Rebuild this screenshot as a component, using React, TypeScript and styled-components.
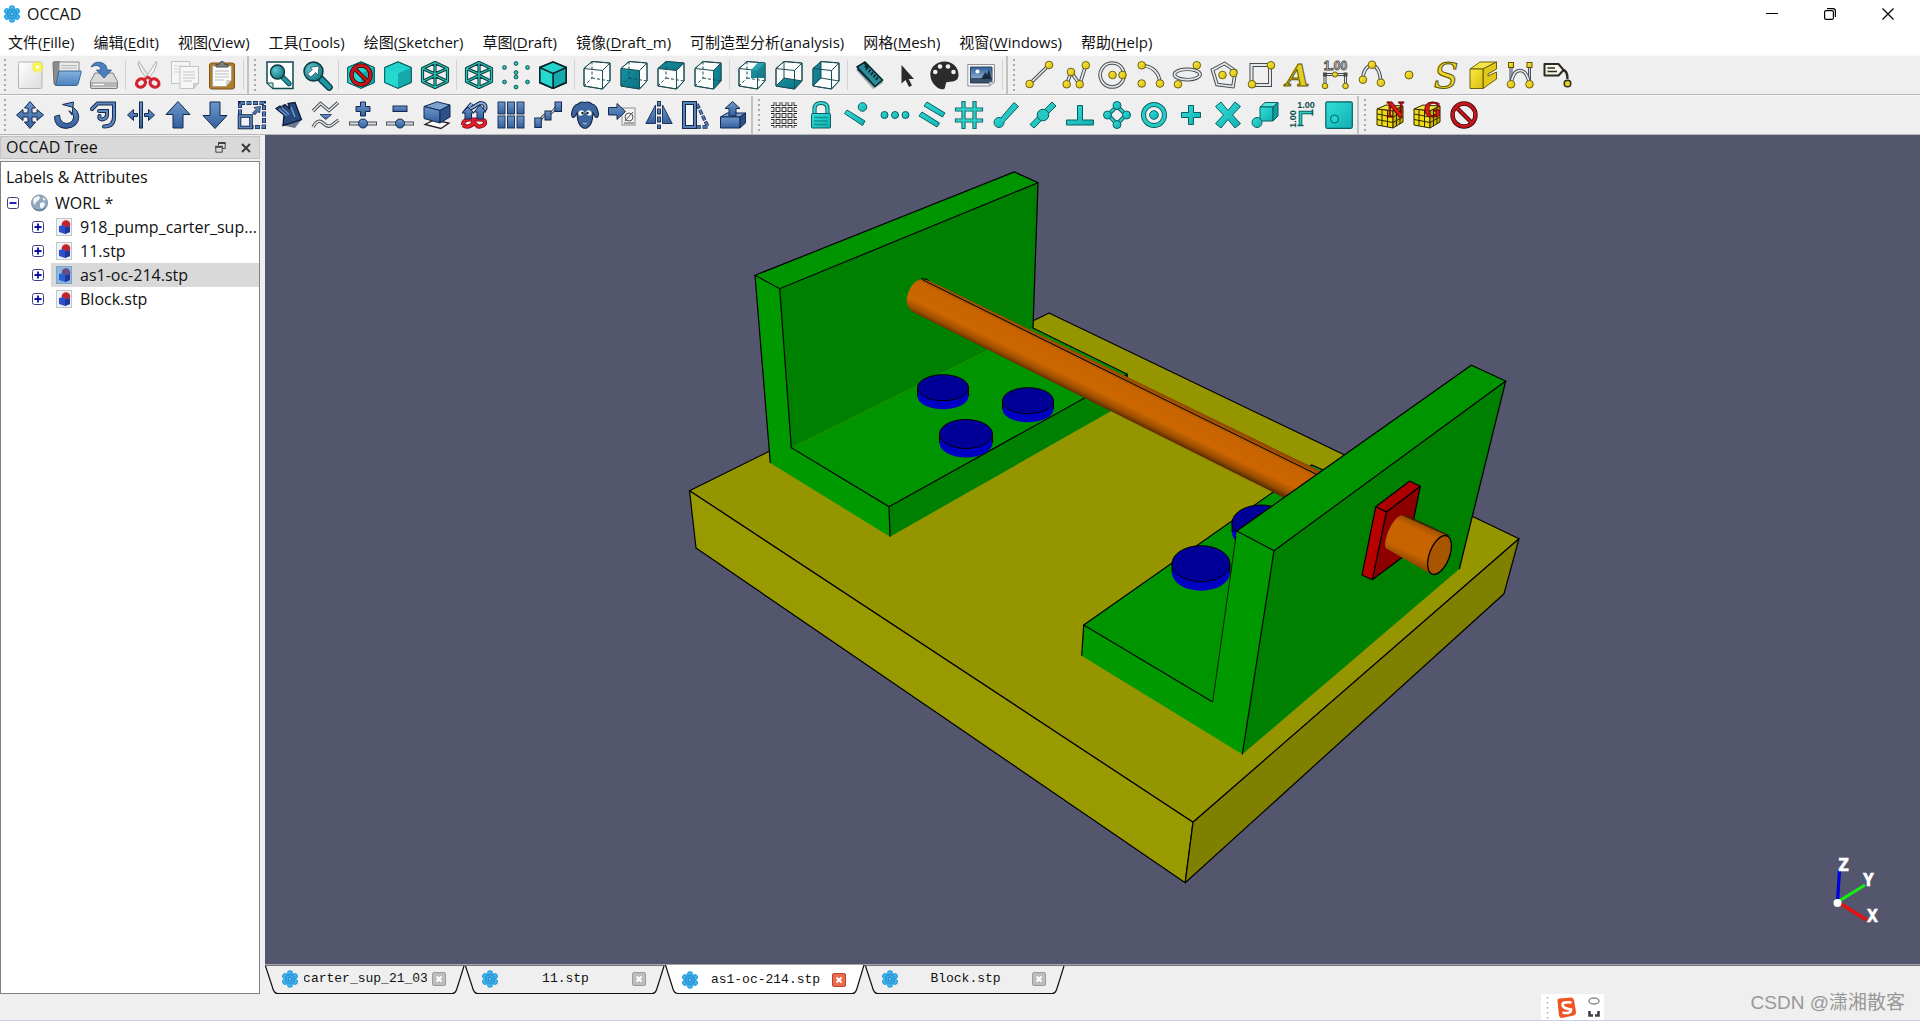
import React from 'react';
import styled, { createGlobalStyle } from 'styled-components';

const UI_FONT = '"Open Sans", "Noto Sans CJK SC", sans-serif';

const GlobalStyle = createGlobalStyle`
  *, *::before, *::after { box-sizing: border-box; }
  body { margin: 0; background: #efefef; }
  button { font: inherit; color: inherit; border: 0; padding: 0; margin: 0; background: none; cursor: default; }
  ul { list-style: none; margin: 0; padding: 0; }
  svg { display: block; }
`;

/* ---------- layout ---------- */

const Window = styled.div`
  display: flex;
  flex-direction: column;
  min-height: 100vh;
  background: #efefef;
  color: #111;
  font-family: ${UI_FONT};
  font-size: 16px;
`;

const TitleBar = styled.header`
  display: flex;
  align-items: center;
  height: 28px;
  padding: 0 3px;
  gap: 6px;
  background: #fff;
`;

const Title = styled.h1`
  flex: 1;
  margin: 0;
  font-size: 16px;
  font-weight: 400;
`;

const WindowButton = styled.button`
  display: flex;
  align-items: center;
  justify-content: center;
  width: 58px;
  height: 28px;
`;

const WindowButtons = styled.div`
  display: flex;
`;

const MenuBar = styled.nav`
  display: flex;
  gap: 3px;
  height: 27px;
  background: #fff;
`;

const MenuButton = styled.button`
  padding: 0 8px;
  line-height: 28px;
  white-space: nowrap;
  font-size: 15px;
  u { text-underline-offset: 2px; }
`;

const ToolRow = styled.div`
  display: flex;
  height: 40px;
  border-top: 1px solid #fafafa;
  border-bottom: 1px solid #b4b4b6;
`;

const ToolBar = styled.div<{ $last?: boolean }>`
  display: flex;
  align-items: center;
  margin-right: 1px;
  border-right: ${(p) => (p.$last ? '0' : '2px solid #c2c2c2')};
`;

const Grip = styled.span`
  width: 3px;
  height: 32px;
  margin: 0 4px;
  background: radial-gradient(circle at 1px 1px, #a9a9a9 1px, transparent 1px) 0 0 / 3px 5px;
`;

const ToolButton = styled.button`
  display: flex;
  align-items: center;
  justify-content: center;
  width: 37px;
  height: 38px;
`;

const ToolSeparator = styled.span`
  width: 1px;
  height: 30px;
  margin: 0 3px;
  background: #d2d2d2;
`;

const Body = styled.main`
  display: grid;
  grid-template-columns: 260px minmax(0, 1fr);
  column-gap: 5px;
  flex: 1;
`;

const Dock = styled.aside`
  display: flex;
  flex-direction: column;
  gap: 2px;
  padding-top: 1px;
`;

const DockHeader = styled.div`
  display: flex;
  align-items: center;
  height: 23px;
  padding: 0 5px;
  border: 1px solid #c3c3c3;
  background: #d9d9d9;
`;

const DockTitle = styled.h2`
  flex: 1;
  margin: 0;
  font-size: 16px;
  line-height: 21px;
  font-weight: 400;
`;

const DockButton = styled.button`
  display: flex;
  align-items: center;
  justify-content: center;
  width: 16px;
  height: 16px;
  margin-left: 10px;
`;

const TreeBox = styled.div`
  flex: 1;
  border: 1px solid #828282;
  background: #fff;
`;

const TreeHeader = styled.div`
  height: 29px;
  padding-left: 5px;
  line-height: 30px;
`;

const TreeRow = styled.div<{ $depth: number }>`
  display: flex;
  align-items: center;
  height: 24px;
  padding-left: ${(p) => 6 + p.$depth * 25}px;
`;

const TreeLabel = styled.button<{ $selected?: boolean }>`
  display: flex;
  flex: 1;
  align-items: center;
  gap: 7px;
  height: 24px;
  margin-left: 7px;
  padding-left: 5px;
  text-align: left;
  white-space: nowrap;
  background: ${(p) => (p.$selected ? '#d9d9d9' : 'transparent')};
`;

const Workspace = styled.section`
  display: flex;
  flex-direction: column;
`;

const Viewport = styled.div`
  position: relative;
  flex: 1;
  min-height: 400px;
  background: #53566d;
  border-bottom: 1px solid #a8a3ab;
`;

const SceneSvg = styled.svg`
  position: absolute;
  inset: 0;
  width: 100%;
  height: 100%;
`;

const TriadSvg = styled.svg`
  position: absolute;
  right: 33px;
  bottom: 36px;
`;

const TabBar = styled.div`
  display: flex;
  height: 29px;
  border-top: 1px solid #77747c;
`;

const TabItem = styled.div<{ $active?: boolean }>`
  position: relative;
  display: grid;
  grid-template-columns: 18px 123px 14px;
  column-gap: 5px;
  align-items: center;
  width: 200px;
  height: 28px;
  margin-top: ${(p) => (p.$active ? '-1px' : '0')};
  padding: ${(p) => (p.$active ? '3px' : '0')} 19px 2px 16px;
`;

const TabShape = styled.svg`
  position: absolute;
  inset: 0;
`;

const TabIcon = styled.span`
  position: relative;
`;

const TabLabel = styled.button`
  position: relative;
  display: flex;
  justify-content: center;
  overflow: hidden;
  white-space: nowrap;
  font-family: "Liberation Mono", monospace;
  font-size: 13px;
  line-height: 22px;
`;

const TabClose = styled.button<{ $active?: boolean }>`
  position: relative;
  display: flex;
  align-items: center;
  justify-content: center;
  width: 14px;
  height: 14px;
  border: 1px solid ${(p) => (p.$active ? '#b8452c' : '#9c9c9c')};
  border-radius: 2px;
  background: ${(p) => (p.$active ? '#ec6a4c' : '#bdbdbd')};
`;

const StatusBar = styled.footer`
  display: flex;
  align-items: center;
  justify-content: flex-end;
  height: 27px;
  padding-right: 15px;
  border-bottom: 1px solid #c8d0e6;
`;

const ImeBar = styled.div`
  display: flex;
  align-items: center;
  width: 63px;
  height: 26px;
  padding-left: 5px;
  margin-right: 147px;
  background: #fff;
`;

const Watermark = styled.span`
  color: #989898;
  font-family: "Liberation Sans", "Noto Sans CJK SC", sans-serif;
  font-size: 19px;
  line-height: 20px;
  padding-bottom: 8px;
  white-space: nowrap;
`;

const DefsSvg = styled.svg`
  position: absolute;
`;

/* ---------- icon primitives ---------- */

const BLUE = 'url(#g-blue)';
const TEAL = 'url(#g-teal)';
const YEL = 'url(#g-yellow)';
const NAVY = '#14284e';
const DTEAL = '#0a5f63';
const OLIVE = '#5f5300';

const Node = ({ x, y, r = 3.8 }: { x: number; y: number; r?: number }) => (
  <circle cx={x} cy={y} r={r} fill={YEL} stroke={OLIVE} strokeWidth={0.9} />
);

const TNode = ({ x, y, r = 4 }: { x: number; y: number; r?: number }) => (
  <circle cx={x} cy={y} r={r} fill={TEAL} stroke={DTEAL} strokeWidth={1} />
);

const Tube = ({ d, w = 3.6, outer = '#444a50', inner = '#e4e8ea', cap = 'butt' }: {
  d: string; w?: number; outer?: string; inner?: string; cap?: 'butt' | 'round' | 'square';
}) => (
  <>
    <path d={d} fill="none" stroke={outer} strokeWidth={w} strokeLinecap={cap} />
    <path d={d} fill="none" stroke={inner} strokeWidth={w - 1.9} strokeLinecap={cap} />
  </>
);

const Ban = ({ cx = 14, cy = 14, r = 10.5 }: { cx?: number; cy?: number; r?: number }) => {
  const k = r * 0.7;
  return (
    <g fill="none">
      <circle cx={cx} cy={cy} r={r} stroke="#3b0000" strokeWidth={4.4} />
      <path d={`M${cx - k} ${cy - k}L${cx + k} ${cy + k}`} stroke="#3b0000" strokeWidth={4.2} />
      <circle cx={cx} cy={cy} r={r} stroke="#c4161c" strokeWidth={2.8} />
      <path d={`M${cx - k} ${cy - k}L${cx + k} ${cy + k}`} stroke="#c4161c" strokeWidth={2.6} />
    </g>
  );
};

const HEX = 'M14 .8L27.3 6.5V21.5L14 27.3L.7 21.5V6.5Z';

const HexCube = ({ edges }: { edges?: boolean }) => (
  <g stroke={edges ? '#08262a' : DTEAL} strokeWidth={edges ? 1.4 : 1} strokeLinejoin="round">
    <path d={HEX} fill="#22d3cc" />
    <path d="M14 12.5L27.3 6.5V21.5L14 27.3Z" fill="#16a9ab" stroke={edges ? undefined : 'none'} />
    <path d="M.7 6.5L14 12.5V27.3L.7 21.5Z" fill="#25d8d0" stroke={edges ? undefined : 'none'} />
    <path d={HEX} fill="none" />
  </g>
);

const WireCube = () => {
  const d = 'M14 1.5L26.5 7.5V20.5L14 26.5L1.5 20.5V7.5ZM1.5 7.5L14 13L26.5 7.5M14 13V26.5M14 1.5V14.5L1.5 20.5M14 14.5L26.5 20.5';
  return (
    <g fill="none" strokeLinejoin="round">
      <path d={d} stroke="#083c40" strokeWidth={3.2} />
      <path d={d} stroke="#2fc4b4" strokeWidth={1.3} />
    </g>
  );
};

const FACES: Record<string, string> = {
  front: 'M1 7.5L19.5 9.5V28L1 25Z',
  top: 'M1 7.5L9 .5L27 2L19.5 9.5Z',
  right: 'M19.5 9.5L27 2V20L19.5 28Z',
  rear: 'M9 .5L27 2V20L9 17Z',
  bottom: 'M1 25L9 17L27 20L19.5 28Z',
  left: 'M1 7.5L9 .5V17L1 25Z',
};

const ViewCube = ({ face }: { face?: string }) => (
  <g stroke="#1c4c55" strokeWidth={1} strokeLinejoin="round" fill="none">
    <path d="M1 7.5L9 .5L27 2V20L19.5 28L1 25Z" fill="#fcfefe" />
    {face && <path d={FACES[face]} fill="url(#g-view)" stroke="none" />}
    <path d="M9 .5V17L1 25M9 17L27 20" strokeDasharray={face && ['rear', 'bottom', 'left'].includes(face) ? undefined : '3 2'} />
    <path d="M1 7.5L9 .5L27 2V20L19.5 28L1 25ZM1 7.5L19.5 9.5L27 2M19.5 9.5V28" />
  </g>
);

const Magnifier = ({ x, y, r }: { x: number; y: number; r: number }) => (
  <g>
    <path d={`M${x + r * 0.75} ${y + r * 0.75}L${x + r * 1.65} ${y + r * 1.65}`} stroke="#07343c" strokeWidth={r * 0.75} strokeLinecap="round" />
    <path d={`M${x + r * 0.85} ${y + r * 0.85}L${x + r * 1.65} ${y + r * 1.65}`} stroke="#1d97a3" strokeWidth={r * 0.5} strokeLinecap="round" />
    <circle cx={x} cy={y} r={r} fill="url(#g-lens)" stroke="#07343c" strokeWidth={1.4} />
  </g>
);

const MeshCube = ({ letter }: { letter: string }) => (
  <g>
    <path d="M1 8L10 4L27 5L17 10Z" fill="#f4e63a" stroke="#2c2700" />
    <path d="M1 8L17 10V27L1 24Z" fill="#f0dc14" stroke="#2c2700" />
    <path d="M17 10L27 5V21L17 27Z" fill="#cdb400" stroke="#2c2700" />
    <path d="M6 9V25M11.500 9.500V26M1 13L17 16L27 10.500M1 18.500L17 21.500L27 16M20.500 8V25M24 7V23" stroke="#2c2700" fill="none" />
    <text x="19.500" y="16" textAnchor="middle" fontFamily="DejaVu Serif, serif" fontWeight="700" fontSize="20" fill="#dc1c1c" stroke="#6c0000" strokeWidth=".8">{letter}</text>
  </g>
);

const Page = ({ x, y, w, h }: { x: number; y: number; w: number; h: number }) => (
  <g>
    <path d={`M${x} ${y}H${x + w}V${y + h - 5}L${x + w - 5} ${y + h}H${x}Z`} fill="#f6f6f6" stroke="#c3c3c3" />
    <path d={`M${x + w} ${y + h - 5}H${x + w - 5}V${y + h}Z`} fill="#d8d8d8" stroke="#b5b5b5" strokeWidth=".7" />
  </g>
);

const drawings: Record<string, React.ReactNode> = {
  new: (
    <>
      <rect x="2.500" y="1" width="23.500" height="26.500" rx="1.500" fill="url(#g-page)" stroke="#b4b4b4" />
      <circle cx="21.500" cy="6" r="6" fill="#f3ee3c" opacity=".55" />
      <circle cx="21.500" cy="6" r="4" fill="#fbf64a" />
      <circle cx="21.500" cy="6" r="1.800" fill="#fffff0" />
    </>
  ),
  open: (
    <>
      <path d="M0 2Q0 .8 1.500 .8H7L9 3V24H3Q1 24 1 22Z" fill="#8c8c8c" stroke="#6a6a6a" />
      <path d="M6 1H26V12H6Z" fill="#ededed" stroke="#8a8a8a" />
      <path d="M8 4.500H24M8 7H24" stroke="#b2b2b2" />
      <path d="M6 10H28Q28.500 10 28 12L25 23Q24.500 24.500 23 24.500H2.500Z" fill="url(#g-folder)" stroke="#3a6698" />
    </>
  ),
  save: (
    <>
      <path d="M5 12H23L27.500 20.500V26Q27.500 27.500 26 27.500H2Q.5 27.500 .5 26V20.500Z" fill="#d9d9d9" stroke="#7c7c7c" />
      <path d="M1 21H27V26H1Z" fill="#b5b7b5" />
      <path d="M3 23.500H14" stroke="#fff" />
      <path d="M1 6Q4 0 11 1.500Q17 3 17 9H21.500L14 17L6.500 9H11Q11 5 7 4.500Q4 4.300 1 6Z" fill="#4a80bf" stroke="#26507f" strokeWidth=".8" />
    </>
  ),
  cut: (
    <>
      <path d="M5 .5L16.500 18H13Q5.500 10 4 2.500Z" fill="#ececec" stroke="#9b9b9b" strokeWidth=".8" />
      <path d="M22 .5L11 18H14Q21.500 10 23 2.500Z" fill="#f6f6f6" stroke="#9b9b9b" strokeWidth=".8" />
      <ellipse cx="7" cy="22" rx="4.600" ry="4" transform="rotate(-35 7 22)" fill="none" stroke="#d32230" strokeWidth="3.200" />
      <ellipse cx="20.500" cy="22" rx="4.600" ry="4" transform="rotate(35 20.500 22)" fill="none" stroke="#d32230" strokeWidth="3.200" />
      <path d="M10 18.500L13.800 16L17.500 18.500" stroke="#d32230" strokeWidth="2.600" fill="none" />
    </>
  ),
  copy: (
    <>
      <Page x={0.5} y={0.5} w={18} h={22} />
      <path d="M3 5H15M3 8H15M3 11H10" stroke="#d5d5d5" />
      <Page x={9} y={5.5} w={18.5} h={22} />
      <path d="M12 11H24M12 14H24M12 17H24M12 20H21" stroke="#c4c4c4" />
    </>
  ),
  paste: (
    <>
      <rect x="1.500" y="2" width="25" height="26" rx="2" fill="#b27a2b" stroke="#7d5318" />
      <path d="M4.500 5H23.500V19L18 25.500H4.500Z" fill="#fafafa" stroke="#8e8e8e" strokeWidth=".6" />
      <path d="M23.500 19H18V25.500Z" fill="#cfcfcf" />
      <path d="M7 10H21M7 13H21M7 16H21M7 19H16" stroke="#bcbcbc" />
      <path d="M8 6V3.500H11Q11.500 .5 14 .5T17 3.500H20V6Z" fill="#7c7f7b" stroke="#4c4f4c" />
    </>
  ),
  fitAll: (
    <>
      <path d="M1 1H27V27.500H7L1 22Z" fill="#fcfefe" stroke="#0c4a52" strokeWidth="1.500" />
      <path d="M1 22H7V27.500Z" fill="#d4e6e6" stroke="#0c4a52" />
      <Magnifier x={11.5} y={11} r={7} />
    </>
  ),
  fitSel: (
    <>
      <Magnifier x={10.5} y={10.5} r={9.5} />
      <path d="M4.500 13L8 16L12.500 11.500L15 14L16 5L7 6.500L9.500 8.500Z" fill="#fff" stroke="#07343c" strokeWidth=".6" />
    </>
  ),
  noStyle: (<><HexCube /><Ban r={9.5} /></>),
  shaded: <HexCube />,
  wire: <WireCube />,
  points: (
    <>
      {[[14, 2.5], [2.5, 6.5], [25.5, 6.5], [14, 11.5], [14, 16], [2.5, 21], [25.5, 21], [14, 26]].map(([x, y]) => (
        <circle key={`${x}-${y}`} cx={x} cy={y} r="1.900" fill="#2fc4b4" stroke="#0a4a4c" strokeWidth=".9" />
      ))}
    </>
  ),
  flat: <HexCube edges />,
  iso: <ViewCube />,
  front: <ViewCube face="front" />,
  top: <ViewCube face="top" />,
  right: <ViewCube face="right" />,
  rear: (
    <>
      <ViewCube />
      <path d="M9 .5L27 2V17L13 16.500V8.500L9 8Z" fill="none" />
      <path d="M13 9L19.500 9.500L27 2V17H13Z" fill="url(#g-view)" opacity=".95" />
      <path d="M13 9L19.500 2L27 2L19.500 9.500Z" fill="#2aa3b0" />
    </>
  ),
  bottom: <ViewCube face="bottom" />,
  left: <ViewCube face="left" />,
  measure: (
    <>
      <path d="M0 9L17 28L27 22V19L9 .5Z" fill="#1a3a40" opacity=".35" />
      <path d="M1 6.500L17.500 25L19.500 27.500L1.500 9Z" fill="#0c3036" />
      <path d="M1 6L9 1L26.500 19L19 25.500Z" fill="#2d8c9c" stroke="#06242a" strokeWidth="1.500" />
      <path d="M8 2L11.500 5.500L8.500 6M12 6L10 9M14.500 8.500L12.500 11.500M17 11L15 14M19.500 13.500L17.500 16.500M22 16L20 19" stroke="#06242a" strokeWidth="1.600" fill="none" />
    </>
  ),
  pointer: (
    <path d="M8.500 4V22.500L12.500 19L16 26L19 24.500L15.700 18H21Z" fill="#2b2b2e" />
  ),
  palette: (
    <>
      <path d="M14.500 .5C6.500 .5 .3 6 .3 13.500C.3 20.500 6 27.500 12 28.300C16 28.700 15 24.500 16 22C17.500 19.500 28.500 23 28.500 14C28.500 6 22.500 .5 14.500 .5Z" fill="#2b2b2b" />
      {[[5.3, 11], [10, 5.5], [18, 5.5], [23.500, 11]].map(([x, y]) => <circle key={x} cx={x} cy={y} r="2.300" fill="#efefef" />)}
    </>
  ),
  picture: (
    <>
      <path d="M.8 3.500H27.500V21L22.500 25H.8Z" fill="#f8f8f8" stroke="#8f9298" />
      <path d="M3.500 6H25V20.500L22 22H3.500Z" fill="url(#g-sky)" stroke="#2c4462" />
      <circle cx="10.500" cy="10.500" r="2" fill="#fff" />
      <path d="M3.500 17H25V20.500L22 22H3.500Z" fill="#22374f" opacity=".8" />
      <path d="M14 18L18.500 11L20 14L22 8L24.500 18Z" fill="#1b2b3d" />
      <path d="M27.500 21H22.500V25Z" fill="#d8d8d8" stroke="#8f9298" strokeWidth=".7" />
    </>
  ),
  line: (<><Tube d="M4.600 23L24 4" /><Node x={4.6} y={23} /><Node x={24} y={4} /></>),
  polyline: (<><Tube d="M4.700 23.300L9 11L17.700 23.300L23.800 4.300" /><Node x={4.7} y={23.3} /><Node x={9} y={11} /><Node x={17.7} y={23.3} /><Node x={23.8} y={4.3} /></>),
  circle: (<><Tube d="M13.200 2A12 12 0 1 1 13.190 2Z" /><Node x={13.5} y={14} /><Node x={23.5} y={14} /></>),
  arc: (<><Tube d="M5.700 4.300Q23 6 24 22.500" /><Node x={5.7} y={4.3} /><Node x={5.7} y={22.5} /><Node x={24} y={22.5} /></>),
  ellipse: (<><Tube d="M1.500 14A12.800 5.200 0 1 0 27 13A12.800 5.200 0 1 0 1.500 14" /><Node x={5} y={23.3} /><Node x={23.8} y={4.3} /></>),
  polygon: (<><Tube d="M14.500 2.500L25.500 10L23 25.500L7 23.500L2.500 9Z" /><Node x={12.5} y={14} /><Node x={23.5} y={12} /></>),
  rect: (<><Tube d="M4.500 4H23V24H4.500Z" w={4} /><Node x={5} y={23.3} /><Node x={24} y={4.3} /></>),
  text: (
    <text x="14" y="24.500" textAnchor="middle" fontFamily="DejaVu Serif, serif" fontStyle="italic" fontWeight="700" fontSize="30" fill="#e6cf1c" stroke={OLIVE} strokeWidth="1">A</text>
  ),
  dimension: (
    <>
      <text x="14.500" y="9" textAnchor="middle" fontFamily="Liberation Sans, sans-serif" fontWeight="700" fontSize="12" fill="#e8e8e8" stroke="#3a3a3a" strokeWidth=".8">1.00</text>
      <Tube d="M4 25V13.500H24.500V25" w={3} />
      <rect x="2" y="11.500" width="4" height="4" fill="#4a4a40" /><rect x="22.500" y="11.500" width="4" height="4" fill="#4a4a40" />
      <Node x={14} y={13.5} r={2.6} /><Node x={4} y={25} r={2.8} /><Node x={24.5} y={25} r={2.8} />
    </>
  ),
  bspline3: (<><Tube d="M4.900 18.700Q5 6 14 4Q22 6 22.900 21.700" /><Node x={4.9} y={18.7} /><Node x={14} y={3.7} /><Node x={22.9} y={21.7} /></>),
  point: <Node x={14} y={14} r={4} />,
  shapeString: (
    <text x="14" y="27" textAnchor="middle" fontFamily="DejaVu Serif, serif" fontStyle="italic" fontSize="36" fill="#ecd82a" stroke={OLIVE} strokeWidth="1">S</text>
  ),
  facebinder: (
    <g stroke={OLIVE} strokeWidth=".9" strokeLinejoin="round">
      <path d="M1 8L11 1H27.500L14 8Z" fill="#f4e64a" />
      <path d="M14 8L27.500 1V8L19 13V15L27.500 11V18L14 27.500Z" fill="#e2c818" />
      <path d="M1 8H14V27.500H1Z" fill={YEL} />
    </g>
  ),
  bezier: (
    <>
      <Tube d="M5 4V22M23.500 4V22" w={3} inner="#cfd2f4" />
      <Tube d="M5 23Q7 9.500 14 9.500T23.500 23" />
      <rect x="2.500" y="1.500" width="5" height="5" fill={YEL} stroke={OLIVE} /><rect x="21" y="1.500" width="5" height="5" fill={YEL} stroke={OLIVE} />
      <Node x={5} y={23.3} /><Node x={23.5} y={23.3} />
    </>
  ),
  label: (
    <>
      <path d="M1.500 3H15.500L20.500 9L15.500 14.500H1.500Z" fill="#f6f5e6" stroke="#2b2b24" strokeWidth="2" strokeLinejoin="round" />
      <path d="M4.500 7H12M4.500 10.500H14" stroke="#2b2b24" strokeWidth="1.500" />
      <path d="M20 9Q24.500 10 24.500 18" fill="none" stroke="#2b2b24" strokeWidth="2.400" />
      <circle cx="24.500" cy="22.500" r="3.300" fill="#e6cf1c" stroke="#2b2b24" strokeWidth="1.500" />
    </>
  ),

  move: <path d="M14 .5L19.500 7H16V12H21V8.500L27.500 14L21 19.500V16H16V21H19.500L14 27.500L8.500 21H12V16H7V19.500L.5 14L7 8.500V12H12V7H8.500Z" fill={BLUE} stroke={NAVY} />,
  rotate: <path d="M9.500 3.500L20.500 1L19 14L15.800 9.800Q21.300 12.500 20.500 17Q19 22.500 13.500 22.500Q7 22 6.500 14L1.500 15.500Q1.500 27 13 27.400Q25.500 26.500 25.800 15.500Q25.500 10 20.500 6.500Z" fill={BLUE} stroke={NAVY} />,
  offset: (
    <>
      <Tube d="M2 8L7.500 2.500H24V16Q24 25.500 14 25.500" w={4} outer={NAVY} inner="#5d87bd" cap="round" />
      <Tube d="M9 10H17V14Q16.500 18 12 18.500Q8.500 18 9.500 15" w={4} outer={NAVY} inner="#5d87bd" cap="round" />
    </>
  ),
  trim: (
    <g fill={BLUE} stroke={NAVY}>
      <rect x="12.500" y="1" width="3" height="26" />
      <path d="M.5 14L6.500 8.500V12.500H10.500V15.500H6.500V19.500ZM27.500 14L21.500 8.500V12.500H17.500V15.500H21.500V19.500Z" />
    </g>
  ),
  up: <path d="M14 .5L26 13.500H19V27H9V13.500H2Z" fill={BLUE} stroke={NAVY} />,
  down: <path d="M14 27.500L26 14.500H19V1H9V14.500H2Z" fill={BLUE} stroke={NAVY} />,
  scale: (
    <>
      <rect x="2" y="2" width="24" height="24" fill="none" stroke={NAVY} strokeWidth="4" strokeDasharray="5 1.500" />
      <rect x="2" y="2" width="24" height="24" fill="none" stroke="#4f7bb5" strokeWidth="2.400" strokeDasharray="4 2.500" strokeDashoffset="-.5" />
      <rect x="1.500" y="15" width="11.500" height="11.500" fill="#f0f4f8" stroke={NAVY} strokeWidth="3.600" />
      <rect x="1.500" y="15" width="11.500" height="11.500" fill="none" stroke="#5d87bd" strokeWidth="1.700" />
      <path d="M14.500 12L18 8.500L16 6.500L22.500 5.500L21.500 12L20 10.500L16.500 14Z" fill={BLUE} stroke={NAVY} strokeWidth=".8" />
    </>
  ),
  edit: (
    <>
      <path d="M6 24L27 18L20 27Z" fill="#14284e" opacity=".6" />
      <path d="M1 7.500L9 14L8 24.500L26.500 18.500L20 1.500L13 2.500L15 8L10 3.500L7.500 5L11 10L5 5Z" fill="#27497c" stroke="#0c1a38" strokeWidth="1.300" />
      <path d="M4 8L12 15M7 6.500L14 13.500M16 6L20 16" stroke="#6d98cc" strokeWidth="1.500" />
    </>
  ),
  wireToSpline: (
    <>
      <Tube d="M1 10L8.500 2.500L17 9.500L26 1.500" w={3.4} />
      <Tube d="M1 26Q6 17 11 22T20 24L26.500 19" w={3.4} />
      <path d="M8 13.500H19.500L13.800 18.500Z" fill={BLUE} stroke={NAVY} strokeWidth=".8" />
    </>
  ),
  addPoint: (
    <>
      <path d="M11.500 1H16.500V5.500H21V10.500H16.500V15H11.500V10.500H7V5.500H11.500Z" fill={BLUE} stroke={NAVY} />
      <rect x=".5" y="21" width="27" height="3" fill="#d8dce0" stroke="#4a4f58" />
      <circle cx="14" cy="22.500" r="4.500" fill={BLUE} stroke={NAVY} />
    </>
  ),
  delPoint: (
    <>
      <rect x="7" y="5" width="14" height="5.500" fill={BLUE} stroke={NAVY} />
      <rect x=".5" y="21" width="27" height="3" fill="#d8dce0" stroke="#4a4f58" />
      <circle cx="14" cy="22.500" r="4.500" fill={BLUE} stroke={NAVY} />
    </>
  ),
  shape2d: (
    <>
      <path d="M2 23.500L11 19L26 22L18 27.500Z" fill="#fbfbfb" stroke="#222" strokeWidth="1.300" />
      <path d="M1 5.500L14 .8L27 4L17 9.500Z" fill="#7ba3d2" stroke={NAVY} />
      <path d="M1 5.500L17 9.500V22L1 17.500Z" fill={BLUE} stroke={NAVY} />
      <path d="M17 9.500L27 4V16L17 22Z" fill="#2c5088" stroke={NAVY} />
    </>
  ),
  toSketch: (
    <g fill="none">
      <path d="M4 12L12 2.500M10 8L20 2Q26 2 25.500 7Q24 11 18 9" stroke={NAVY} strokeWidth="4.200" />
      <path d="M4 12L12 2.500M10 8L20 2Q26 2 25.500 7Q24 11 18 9" stroke="#8eb0da" strokeWidth="2" />
      <path d="M3 24Q3 19 9 18.500H21Q26 19 25 22.500Q23 26 18 25.500L12 20M3 24Q8 28 14 22" stroke="#7c0a14" strokeWidth="4.200" />
      <path d="M3 24Q3 19 9 18.500H21Q26 19 25 22.500Q23 26 18 25.500L12 20M3 24Q8 28 14 22" stroke="#e0202c" strokeWidth="2.600" />
      <path d="M8 6L14 12H11.500V18H5V12H2ZM20 4L26 11H23.500V18H17V11H14Z" fill={BLUE} stroke={NAVY} />
    </g>
  ),
  array: (
    <g fill={BLUE} stroke={NAVY} strokeWidth=".9">
      {[1, 10.5, 20].map((x) => [1, 15].map((y) => <rect key={`${x}-${y}`} x={x} y={y} width="7" height="12" />))}
    </g>
  ),
  pathArray: (
    <>
      <Tube d="M6 21Q8 14 13 13.500T23 5" w={3} />
      <g fill={BLUE} stroke={NAVY}><rect x=".8" y="17" width="6.500" height="9.500" /><rect x="11" y="10" width="6" height="9" /><rect x="21" y="1" width="6.500" height="9.500" /></g>
    </>
  ),
  clone: (
    <>
      <path d="M7 3Q10 0 14 1.500Q18 0 21 3Q26 4 27.500 13Q27 17.500 24.500 16L22 12Q21.500 24 16.500 26.500Q14 28 11.500 26.500Q6.500 24 6 12L3.500 16Q1 17.500 .5 13Q2 4 7 3Z" fill="#3d669f" stroke={NAVY} strokeWidth="1.200" />
      <path d="M7.500 11Q11 7.500 13.500 11.500Q11 16.500 7.500 14ZM20.500 11Q17 7.500 14.500 11.500Q17 16.500 20.500 14Z" fill="#fff" />
      <circle cx="11.500" cy="12" r="1.200" fill="#111" /><circle cx="16.500" cy="12" r="1.200" fill="#111" />
      <path d="M12 22Q14 24 16 22" stroke="#b7cbe6" fill="none" />
    </>
  ),
  drawing: (
    <>
      <rect x="14" y="7" width="13" height="17" fill="#f4f4f4" stroke="#8b8b8b" />
      <circle cx="21" cy="16" r="4" fill="none" stroke="#555" /><path d="M17 20L25 11M16 22H26" stroke="#555" />
      <path d="M.5 6.500H9V2.500L17.500 10.500L9 18.500V14H.5Z" fill={BLUE} stroke={NAVY} />
    </>
  ),
  mirror: (
    <g fill={BLUE} stroke={NAVY} strokeWidth=".9">
      <path d="M.8 22.500L10.500 4V22.500ZM27.200 22.500L17.500 4V22.500Z" />
      <rect x="12.500" y=".5" width="3" height="4.500" /><rect x="12.500" y="8" width="3" height="5" /><rect x="12.500" y="16" width="3" height="5" /><rect x="12.500" y="24" width="3" height="3.500" />
    </g>
  ),
  stretch: (
    <>
      <path d="M15 3L26 26H15" fill="none" stroke={NAVY} strokeWidth="3.400" strokeDasharray="5 1.500" />
      <path d="M15 3L26 26H15" fill="none" stroke="#5d87bd" strokeWidth="1.600" strokeDasharray="5 1.500" />
      <rect x="2" y="2" width="11" height="24" fill="#f4f6f8" stroke={NAVY} strokeWidth="4" />
      <rect x="2" y="2" width="11" height="24" fill="none" stroke="#5d87bd" strokeWidth="1.900" />
    </>
  ),
  upgrade: (
    <>
      <path d="M1.500 16L8 12H26.500L21 16Z" fill="#7ba3d2" stroke={NAVY} />
      <path d="M1.500 16H21V27H1.500Z" fill={BLUE} stroke={NAVY} />
      <path d="M21 16L26.500 12V22L21 27Z" fill="#2c5088" stroke={NAVY} />
      <path d="M13.500 .5L21 7.500H17V15H10V7.500H6Z" fill={BLUE} stroke={NAVY} />
    </>
  ),
  grid: <Tube d="M1 5.500H27M1 11.500H27M1 17.500H27M1 23.500H27M5 1V27M11 1V27M17 1V27M23 1V27" w={3} outer="#333" inner="#f8f8f8" />,
  lock: (
    <>
      <path d="M7.500 13V8Q7.500 2 14 2T20.500 8V13" fill="none" stroke={DTEAL} strokeWidth="4.200" />
      <path d="M7.500 13V8Q7.500 2 14 2T20.500 8V13" fill="none" stroke="#3ad8cf" strokeWidth="2.200" />
      <rect x="4.500" y="12.500" width="19" height="14.500" rx="1" fill={TEAL} stroke={DTEAL} />
      <path d="M7 16.500H21M7 20H21M7 23.500H21" stroke="#0f9396" strokeWidth="1.500" />
    </>
  ),
  near: (<><path d="M.5 12.500L3 9L21 20L18.500 24.500Z" fill={TEAL} stroke={DTEAL} /><TNode x={18.5} y={6} r={4.3} /></>),
  extension: (<><TNode x={3.5} y={14} r={3.5} /><TNode x={14} y={14} r={3.5} /><TNode x={24.5} y={14} r={3.5} /></>),
  parallel: <path d="M6 5L9 1L27 12L24.500 16ZM1 15L4 11L21.500 22L19 26Z" fill={TEAL} stroke={DTEAL} />,
  hash: <Tube d="M8.500 2V26M19.500 2V26M2 8.500H26M2 19.500H26" w={4.2} outer={DTEAL} inner="#2fd0c8" cap="square" />,
  endpoint: (<><path d="M8 18L22 1.500L26.500 5.500L11 22Z" fill={TEAL} stroke={DTEAL} /><TNode x={7} y={21.5} r={5} /><path d="M9.500 17.500L12 20.500" stroke="#26c6c2" strokeWidth="3" /></>),
  midpoint: (<><path d="M1 23.500L23 1L27 5L5 27Z" fill={TEAL} stroke={DTEAL} /><circle cx="14" cy="14" r="5.800" fill="#26c6c2" stroke={DTEAL} /><path d="M9 15.500L15.500 9L19 12.500L12.500 19Z" fill="#26c6c2" /></>),
  perpendicular: <path d="M11.500 4.500H16.500V19H27.500V24H.5V19H11.500Z" fill={TEAL} stroke={DTEAL} />,
  angle: (<><Tube d="M14 5L23 14L14 23L5 14Z" w={4} outer={DTEAL} inner="#2fd0c8" /><TNode x={14} y={4.5} /><TNode x={23.5} y={14} /><TNode x={14} y={23.500} /><TNode x={4.5} y={14} /></>),
  center: (
    <>
      <circle cx="14" cy="14" r="10.500" fill="none" stroke={DTEAL} strokeWidth="5" /><circle cx="14" cy="14" r="10.500" fill="none" stroke="#26cbc6" strokeWidth="3.200" />
      <TNode x={14} y={14} r={4.3} />
    </>
  ),
  plus: <path d="M11.500 4.500H16.500V11.500H23.500V16.500H16.500V23.500H11.500V16.500H4.500V11.500H11.500Z" fill={TEAL} stroke={DTEAL} />,
  cross: <path d="M1.500 5.500L7 1L14 9.500L21 1L26.500 5.500L18.500 14L26.500 22.500L21 27L14 18.500L7 27L1.500 22.500L9.500 14Z" fill={TEAL} stroke={DTEAL} />,
  special: (
    <>
      <path d="M9 6L14 1.500H27L22 6Z" fill="#54e4dc" stroke={DTEAL} /><path d="M9 6H22V20H9Z" fill={TEAL} stroke={DTEAL} /><path d="M22 6L27 1.500V15L22 20Z" fill="#0f9da0" stroke={DTEAL} />
      <TNode x={6} y={21.5} r={5} />
    </>
  ),
  dimensions: (
    <>
      <Tube d="M12.500 24V11.500H24" w={3.6} outer={DTEAL} inner="#2fd0c8" />
      <path d="M9.500 24.500H15.500M24.500 8.500V14.500" stroke={DTEAL} strokeWidth="1.600" />
      <text x="18" y="7" textAnchor="middle" fontFamily="Liberation Sans, sans-serif" fontWeight="700" fontSize="9" fill="#0b4a4c">1.00</text>
      <text transform="rotate(-90)" x="-18" y="8" textAnchor="middle" fontFamily="Liberation Sans, sans-serif" fontWeight="700" fontSize="9" fill="#0b4a4c">1.00</text>
    </>
  ),
  workplane: (<><rect x=".8" y=".8" width="26.500" height="26.500" rx="1.500" fill={TEAL} stroke={DTEAL} strokeWidth="1.200" /><circle cx="9.500" cy="18" r="4" fill="#22d3cc" stroke={DTEAL} /></>),
  meshN: <MeshCube letter="N" />,
  meshG: <MeshCube letter="G" />,
  stop: <Ban r={11.5} />,
};

const Icon = ({ name }: { name: string }) => (
  <svg width="28" height="28" viewBox="0 0 28 28" overflow="visible" aria-hidden="true">
    {drawings[name]}
  </svg>
);

const SharedDefs = () => (
  <DefsSvg width="0" height="0" aria-hidden="true">
    <defs>
      <linearGradient id="g-blue" x1="0" y1="0" x2="0" y2="1"><stop offset="0" stopColor="#6d97cb" /><stop offset="1" stopColor="#335f9d" /></linearGradient>
      <linearGradient id="g-teal" x1="0" y1="0" x2="1" y2="1"><stop offset="0" stopColor="#31e0d8" /><stop offset="1" stopColor="#12aeb0" /></linearGradient>
      <linearGradient id="g-yellow" x1="0" y1="0" x2="1" y2="1"><stop offset="0" stopColor="#fbea4a" /><stop offset="1" stopColor="#d9bd08" /></linearGradient>
      <linearGradient id="g-view" x1="0" y1="0" x2="1" y2="1"><stop offset="0" stopColor="#1393a3" /><stop offset="1" stopColor="#0b6f80" /></linearGradient>
      <radialGradient id="g-lens" cx=".35" cy=".35" r=".75"><stop offset="0" stopColor="#5cc5cc" /><stop offset="1" stopColor="#11727f" /></radialGradient>
      <linearGradient id="g-page" x1="0" y1="0" x2="1" y2="1"><stop offset="0" stopColor="#fff" /><stop offset="1" stopColor="#dcdcdc" /></linearGradient>
      <linearGradient id="g-folder" x1="0" y1="0" x2="0" y2="1"><stop offset="0" stopColor="#85b1df" /><stop offset="1" stopColor="#4d82bd" /></linearGradient>
      <linearGradient id="g-sky" x1="0" y1="0" x2="0" y2="1"><stop offset="0" stopColor="#33619c" /><stop offset="1" stopColor="#a7c4e2" /></linearGradient>
      <linearGradient id="g-rod" gradientUnits="userSpaceOnUse" x1="1050" y1="338" x2="1033" y2="372.500">
        <stop offset="0" stopColor="#8a4500" /><stop offset=".1" stopColor="#a85400" /><stop offset=".2" stopColor="#c86400" /><stop offset=".68" stopColor="#cc6600" /><stop offset=".88" stopColor="#9c4e00" /><stop offset="1" stopColor="#5e2f00" />
      </linearGradient>
      <linearGradient id="g-stub" gradientUnits="userSpaceOnUse" x1="1424" y1="524" x2="1407" y2="562">
        <stop offset="0" stopColor="#9a4d00" /><stop offset=".2" stopColor="#c66300" /><stop offset=".75" stopColor="#c86400" /><stop offset="1" stopColor="#8c4600" />
      </linearGradient>
    </defs>
  </DefsSvg>
);

const FlowerLogo = ({ size = 18 }: { size?: number }) => (
  <svg width={size} height={size} viewBox="0 0 18 18" aria-hidden="true">
    {[0, 60, 120, 180, 240, 300].map((a) => (
      <g key={a} transform={`rotate(${a} 9 9)`}>
        <circle cx="9" cy="3.300" r="3" fill="#27a3e2" />
        <circle cx="9" cy="3.800" r="1.500" fill="none" stroke="#8fd2f3" strokeWidth=".5" />
      </g>
    ))}
    <circle cx="9" cy="9" r="5" fill="#1f94d8" />
    <circle cx="9" cy="9" r="3.300" fill="none" stroke="#7cc8f0" strokeWidth=".6" />
    <circle cx="9" cy="9" r="1" fill="#8fd2f3" />
  </svg>
);

const Toggle = ({ open }: { open?: boolean }) => (
  <svg width="12" height="12" viewBox="0 0 12 12">
    <rect x=".5" y=".5" width="11" height="11" rx="2" fill="#fff" stroke="#3a3f7e" />
    <path d={open ? 'M2.500 6H9.500' : 'M2.500 6H9.500M6 2.500V9.500'} stroke="#0a0ab0" strokeWidth="1.800" />
  </svg>
);

const Globe = () => (
  <svg width="17" height="18" viewBox="0 0 17 18" aria-hidden="true">
    <circle cx="8.500" cy="9" r="8" fill="#8fa9c0" stroke="#8795a2" />
    <path d="M3 4Q7 1 9 3L8 6L5 8L4 11Q1 8 3 4ZM9 9L13 8L14 11L11 15L9 13ZM12 3L15 6L12 6.500Z" fill="#f4f8fb" />
    <path d="M2 13Q8 19 15 12Q14 17 8.500 17T2 13Z" fill="#46668c" opacity=".6" />
  </svg>
);

const PartIcon = ({ selected }: { selected?: boolean }) => (
  <svg width="17" height="18" viewBox="0 0 17 18" aria-hidden="true">
    <rect x=".5" y=".5" width="15" height="17" fill={selected ? '#8fb8de' : '#f1f1f4'} stroke={selected ? '#7ba6cf' : '#c3c3ca'} />
    <circle cx="10" cy="6.500" r="4.300" fill={selected ? '#6f4a7c' : '#c3222a'} />
    <path d="M3 8L8 7L9.500 9L14 8V14L9 16L3 14Z" fill={selected ? '#2a62d0' : '#2e4fd0'} />
    <path d="M9 9.500L14 8.500V14L9 16Z" fill="#1f379c" />
  </svg>
);

/* ---------- 3D scene ---------- */

const Bolt = ({ x, y, rx, ry, h }: { x: number; y: number; rx: number; ry: number; h: number }) => (
  <g>
    <path d={`M${x - rx} ${y}V${y + h}A${rx} ${ry} 0 0 0 ${x + rx} ${y + h}V${y}Z`} fill="#0000c4" />
    <path d={`M${x - rx} ${y}V${y + h}M${x + rx} ${y}V${y + h}`} stroke="#000" />
    <ellipse cx={x} cy={y} rx={rx} ry={ry} fill="#000098" stroke="#000" />
  </g>
);

const Scene = () => (
  <SceneSvg viewBox="265 135 1655 829" role="img" aria-label="as1-oc-214.stp">
    <g stroke="#000" strokeWidth="1.200" strokeLinejoin="round">
      <path d="M689.500 490.700L1049 313L1519 538.700L1193 822.300Z" fill="#959500" />
      <path d="M689.500 490.700L1193 822.300L1185.200 882.700L696 548Z" fill="#999900" />
      <path d="M1193 822.300L1519 538.700L1504 593.700L1185.200 882.700Z" fill="#808000" />
    </g>

    <path d="M779.700 288.700L1038 182.700L1033 328L791.300 447.700Z" fill="#008000" />
    <path d="M791.300 447.700L1033 328L1127.300 374.300L889 506.700Z" fill="#009500" />
    <path d="M889 506.700L1127.300 374.300L1127 402L890 536.700Z" fill="#008000" />
    <path d="M755 275.300L779.700 288.700L791.300 447.700L889 506.700L890 536.700L770.300 463Z" fill="#009a00" />
    <path d="M755 275.300L1014.300 172L1038 182.700L779.700 288.700Z" fill="#009500" />
    <path d="M755 275.300L1014.300 172L1038 182.700L779.700 288.700ZM755 275.300L770.300 463M779.700 288.700L791.300 447.700L889 506.700L890 536.700M889 506.700L1127.300 374.300V379M1038 182.700L1033 328L1127.300 374.300" fill="none" stroke="#000" strokeWidth="1.200" />

    <Bolt x={943} y={387.7} rx={25.5} ry={13} h={8.500} />
    <Bolt x={1028} y={400.7} rx={25.5} ry={13} h={8.500} />
    <Bolt x={966} y={434} rx={26.5} ry={14.5} h={9} />

    <path d="M1083.700 625L1311.700 465L1330 473L1236.700 531L1212.700 702Z" fill="#009500" />
    <path d="M1083.700 625L1311.700 465L1330 473" fill="none" stroke="#000" strokeWidth="1.200" />
    <Bolt x={1201} y={563.7} rx={29} ry={18} h={9} />
    <Bolt x={1261} y={523} rx={29} ry={18} h={9} />

    <path d="M928 280L1335 478L1320 515L1281.700 496.700L912.300 311.700Q905 305 907 297Q911 281 922 279Z" fill="url(#g-rod)" />
    <path d="M923 280L1160 397.300L1330 481M921 279Q925 278 929 280.500" fill="none" stroke="#000" />

    <path d="M1236.700 531L1274 550.700L1242.300 754.300L1081.700 655.700L1083.700 625L1212.700 702Z" fill="#009a00" />
    <path d="M1274 550.700L1505.700 381L1459.300 569L1242.300 754.300Z" fill="#008000" />
    <path d="M1236.700 531L1471.300 365.300L1505.700 381L1274 550.700Z" fill="#009500" />
    <path d="M1236.700 531L1471.300 365.300L1505.700 381L1274 550.700ZM1274 550.700L1242.300 754.300M1505.700 381L1459.300 569M1081.700 655.700L1083.700 625L1212.700 702" fill="none" stroke="#000" strokeWidth="1.200" />
    <path d="M1212.700 702L1236 536" fill="none" stroke="#000" strokeWidth=".8" />

    <g stroke="#000" strokeWidth="1.200" strokeLinejoin="round">
      <path d="M1386.300 512L1420.300 486.300L1406.700 554L1372.300 579.700Z" fill="#8c0000" />
      <path d="M1375.700 506.700L1409.700 481L1420.300 486.300L1386.300 512Z" fill="#ac0000" />
      <path d="M1375.700 506.700L1386.300 512L1372.300 579.700L1362 575Z" fill="#b80000" />
    </g>
    <path d="M1402.300 515L1448.300 535.700L1431 574.300L1385.500 548Q1384 543 1388 532Q1394 517 1402.300 515Z" fill="url(#g-stub)" />
    <path d="M1402.300 515L1448.300 535.700M1408 516L1450 536" stroke="#3c1e00" />
    <ellipse cx="1439.500" cy="555" rx="10" ry="20.500" transform="rotate(21 1439.500 555)" fill="#a85500" stroke="#000" strokeWidth="1.300" />
  </SceneSvg>
);

const Triad = () => (
  <TriadSvg width="54" height="76" viewBox="1833 852 54 76" aria-label="XYZ">
    <path d="M1837.500 902L1839.500 870" stroke="#0000e0" strokeWidth="3.300" />
    <path d="M1837.500 902L1865 885" stroke="#14f014" strokeWidth="3" />
    <path d="M1837.500 902L1867 920" stroke="#e81010" strokeWidth="3.600" />
    <circle cx="1837.500" cy="903" r="4" fill="#fff" />
    <g fill="#fff" stroke="#fff" strokeWidth=".6" fontFamily="DejaVu Sans Mono, monospace" fontWeight="700" fontSize="18">
      <text x="1838" y="871">Z</text>
      <text x="1863" y="886">Y</text>
      <text x="1867" y="922">X</text>
    </g>
  </TriadSvg>
);

/* ---------- data ---------- */

const menus: [string, string, string][] = [
  ['文件(', 'F', 'ille)'], ['编辑(', 'E', 'dit)'], ['视图(', 'V', 'iew)'], ['工具(', 'T', 'ools)'],
  ['绘图(', 'S', 'ketcher)'], ['草图(', 'D', 'raft)'], ['镜像(', 'D', 'raft_m)'], ['可制造型分析(', 'a', 'nalysis)'],
  ['网格(', 'M', 'esh)'], ['视窗(', 'W', 'indows)'], ['帮助(', 'H', 'elp)'],
];

const toolRows: string[][] = [
  [
    'new open save | cut copy paste |',
    'fitAll fitSel | noStyle shaded wire | wire points flat | iso front top right | rear bottom left | measure pointer palette picture |',
    'line polyline circle arc ellipse polygon rect text dimension bspline3 point shapeString facebinder bezier label',
  ],
  [
    'move rotate offset trim up down scale edit wireToSpline addPoint delPoint shape2d toSketch array pathArray clone drawing mirror stretch upgrade',
    'grid lock near extension parallel hash endpoint midpoint perpendicular angle center plus cross special dimensions workplane',
    'meshN meshG stop',
  ],
];

const files = ['918_pump_carter_sup...', '11.stp', 'as1-oc-214.stp', 'Block.stp'];
const tabs = ['carter_sup_21_03', '11.stp', 'as1-oc-214.stp', 'Block.stp'];
const ACTIVE = 'as1-oc-214.stp';

export default function App() {
  return (
    <Window>
      <GlobalStyle />
      <SharedDefs />
      <TitleBar>
        <FlowerLogo />
        <Title>OCCAD</Title>
        <WindowButtons>
          <WindowButton aria-label="Minimize"><svg width="12" height="12"><path d="M0 5.500H12" stroke="#000" /></svg></WindowButton>
          <WindowButton aria-label="Restore">
            <svg width="12" height="12" fill="none" stroke="#000" strokeWidth="1.200"><rect x=".6" y="2.600" width="8.800" height="8.800" rx="1.500" /><path d="M3 .6H9Q11.400 .6 11.400 3V9" /></svg>
          </WindowButton>
          <WindowButton aria-label="Close"><svg width="12" height="12"><path d="M.5 .5L11.500 11.500M11.500 .5L.5 11.500" stroke="#000" strokeWidth="1.200" /></svg></WindowButton>
        </WindowButtons>
      </TitleBar>
      <MenuBar>
        {menus.map(([a, b, c]) => <MenuButton key={a}>{a}<u>{b}</u>{c}</MenuButton>)}
      </MenuBar>
      {toolRows.map((row, r) => (
        <ToolRow key={r}>
          {row.map((bar, i) => (
            <ToolBar key={i} role="toolbar" $last={i === row.length - 1}>
              <Grip />
              {bar.split(' ').map((name, k) => (name === '|'
                ? <ToolSeparator key={k} />
                : <ToolButton key={k} aria-label={name}><Icon name={name} /></ToolButton>))}
            </ToolBar>
          ))}
        </ToolRow>
      ))}
      <Body>
        <Dock>
          <DockHeader>
            <DockTitle>OCCAD Tree</DockTitle>
            <DockButton aria-label="Float">
              <svg width="11" height="11" fill="none" stroke="#444"><path d="M3.500 3.500V.8H10.200V6.500H7.500" /><path d="M3 1H10.500" strokeWidth="2" /><path d="M.8 4V10.200H7.200V4" /><path d="M.3 4.800H7.700" strokeWidth="2" /></svg>
            </DockButton>
            <DockButton aria-label="Close panel">
              <svg width="10" height="10"><path d="M1 1L9 9M9 1L1 9" stroke="#3a3a3a" strokeWidth="2" /></svg>
            </DockButton>
          </DockHeader>
          <TreeBox>
            <TreeHeader>Labels &amp; Attributes</TreeHeader>
            <ul>
              <li>
                <TreeRow $depth={0}>
                  <button aria-label="Collapse"><Toggle open /></button>
                  <TreeLabel><Globe />WORL *</TreeLabel>
                </TreeRow>
                <ul>
                  {files.map((f) => (
                    <li key={f}>
                      <TreeRow $depth={1}>
                        <button aria-label="Expand"><Toggle /></button>
                        <TreeLabel $selected={f === ACTIVE}><PartIcon selected={f === ACTIVE} />{f}</TreeLabel>
                      </TreeRow>
                    </li>
                  ))}
                </ul>
              </li>
            </ul>
          </TreeBox>
        </Dock>
        <Workspace>
          <Viewport>
            <Scene />
            <Triad />
          </Viewport>
          <TabBar role="tablist">
            {tabs.map((t) => {
              const active = t === ACTIVE;
              return (
                <TabItem key={t} $active={active}>
                  <TabShape width="200" height="29" overflow="visible" aria-hidden="true">
                    <path
                      d={active
                        ? 'M.5 0L8 24Q9.300 28.500 13 28.500H187Q190.500 28.500 191.800 24L199 0'
                        : 'M.5 0L8 23Q9.300 27.500 13 27.500H187Q190.500 27.500 191.800 23L199 0'}
                      fill={active ? '#fff' : '#efefef'} stroke="#111" strokeWidth="1.200"
                    />
                  </TabShape>
                  <TabIcon><FlowerLogo /></TabIcon>
                  <TabLabel role="tab" aria-selected={active}>{t}</TabLabel>
                  <TabClose $active={active} aria-label={`Close ${t}`}>
                    <svg width="8" height="8"><path d="M1.500 1.500L6.500 6.500M6.500 1.500L1.500 6.500" stroke="#fff" strokeWidth="2" /></svg>
                  </TabClose>
                </TabItem>
              );
            })}
          </TabBar>
        </Workspace>
      </Body>
      <StatusBar>
        <ImeBar>
          <svg width="56" height="26" viewBox="0 0 56 26" aria-hidden="true">
            <path d="M1.500 3V26" stroke="#a8a8a8" strokeWidth="1.500" strokeDasharray="1.500 3.500" />
            <path d="M11.500 7Q11 5 13.500 4.500L25 3.500Q27.500 3.500 28 6L30 18Q30 21 27.500 21.500L16 24Q13.500 24 13 21.500Z" fill="#ef5423" />
            <path d="M25.500 8.500Q16 7.500 16.500 11T25 15.500Q25 20.500 16.500 18.500" fill="none" stroke="#fff" strokeWidth="2.600" />
            <ellipse cx="48" cy="7" rx="5" ry="3" fill="none" stroke="#8a9096" strokeWidth="1.500" />
            <path d="M43.500 17V21.500H47M49 21.500H52.500V17" fill="none" stroke="#3c4046" strokeWidth="2.600" />
          </svg>
        </ImeBar>
        <Watermark>CSDN @潇湘散客</Watermark>
      </StatusBar>
    </Window>
  );
}
